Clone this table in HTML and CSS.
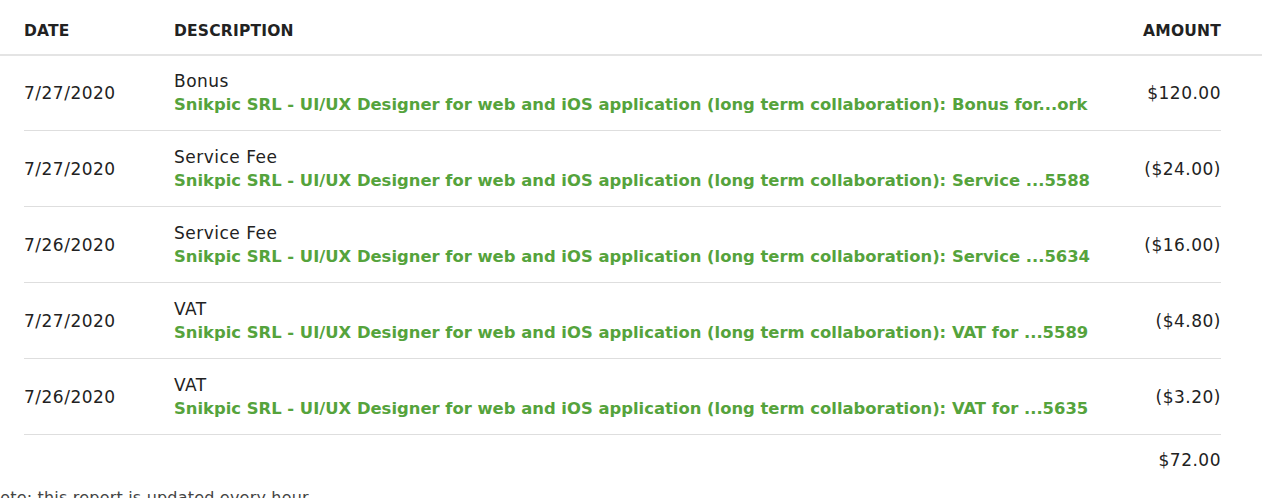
FILE: index.html
```html
<!DOCTYPE html>
<html>
<head>
<meta charset="utf-8">
<link rel="stylesheet" href="styles.css">
</head>
<body>
<div class="report">
  <div class="head">
    <div class="th">Date</div>
    <div class="th">Description</div>
    <div class="th amount">Amount</div>
  </div>
  <div class="rows">
    <div class="row">
      <div class="date">7/27/2020</div>
      <div class="desc"><div class="type">Bonus</div><a class="link">Snikpic SRL - UI/UX Designer for web and iOS application (long term collaboration): Bonus for...ork</a></div>
      <div class="amount">$120.00</div>
    </div>
    <div class="row">
      <div class="date">7/27/2020</div>
      <div class="desc"><div class="type">Service Fee</div><a class="link">Snikpic SRL - UI/UX Designer for web and iOS application (long term collaboration): Service ...5588</a></div>
      <div class="amount">($24.00)</div>
    </div>
    <div class="row">
      <div class="date">7/26/2020</div>
      <div class="desc"><div class="type">Service Fee</div><a class="link">Snikpic SRL - UI/UX Designer for web and iOS application (long term collaboration): Service ...5634</a></div>
      <div class="amount">($16.00)</div>
    </div>
    <div class="row">
      <div class="date">7/27/2020</div>
      <div class="desc"><div class="type">VAT</div><a class="link">Snikpic SRL - UI/UX Designer for web and iOS application (long term collaboration): VAT for ...5589</a></div>
      <div class="amount">($4.80)</div>
    </div>
    <div class="row">
      <div class="date">7/26/2020</div>
      <div class="desc"><div class="type">VAT</div><a class="link">Snikpic SRL - UI/UX Designer for web and iOS application (long term collaboration): VAT for ...5635</a></div>
      <div class="amount">($3.20)</div>
    </div>
    <div class="total">
      <div class="amount">$72.00</div>
    </div>
  </div>
  <p class="note">Note: this report is updated every hour</p>
</div>
</body>
</html>
```
FILE: styles.css
```css
html, body {
  margin: 0;
  padding: 0;
  background: #fff;
  overflow: hidden;
}
body {
  font-family: "DejaVu Sans", "Noto Sans", sans-serif;
  color: #222;
  font-size: 17px;
  letter-spacing: 0.5px;
}
.report {
  width: 1262px;
}
.head {
  box-sizing: border-box;
  display: grid;
  grid-template-columns: 150px 1fr auto;
  align-items: center;
  height: 56px;
  padding: 7px 41px 0 24px;
  border-bottom: 2px solid #e4e4e4;
}
.th {
  font-weight: bold;
  font-size: 15.5px;
  letter-spacing: 0.2px;
  text-transform: uppercase;
  color: #222;
}
.rows {
  margin: 0 41px 0 24px;
}
.row {
  display: grid;
  grid-template-columns: 150px 1fr auto;
  align-items: center;
  height: 75px;
  border-bottom: 1px solid #dedede;
}
.row:first-child {
  height: 74px;
}
.desc {
  line-height: 24px;
}
.type {
  color: #222;
}
.link {
  display: block;
  color: #55a33c;
  font-weight: bold;
  font-size: 16.4px;
  letter-spacing: 0;
  white-space: nowrap;
}
.amount {
  text-align: right;
}
.total {
  display: flex;
  justify-content: flex-end;
  height: 50px;
  align-items: center;
}
.note {
  margin: 0 0 0 -12px;
  padding-top: 3px;
  font-size: 16px;
  letter-spacing: 0.2px;
  color: #444;
}
```
